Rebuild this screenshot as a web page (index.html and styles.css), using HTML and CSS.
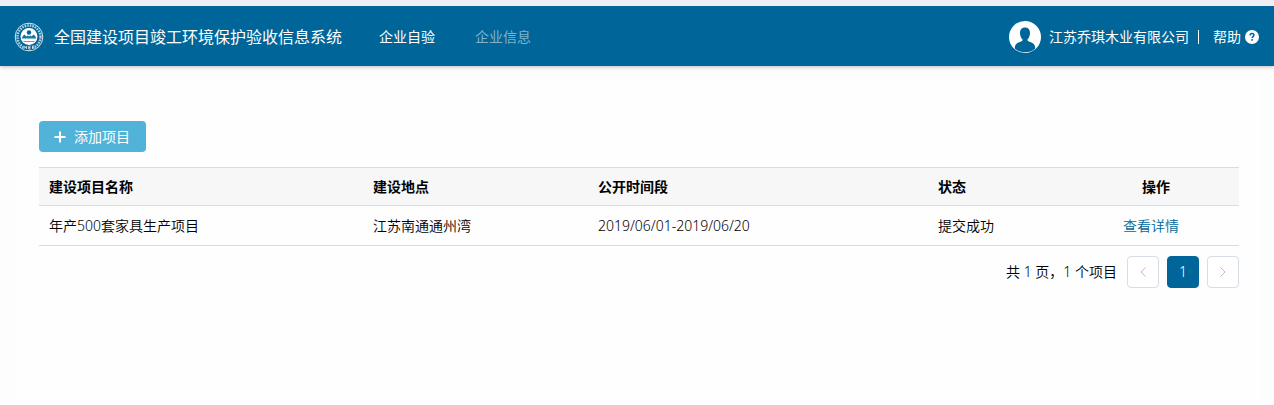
FILE: index.html
```html
<!DOCTYPE html>
<html lang="zh-CN">
<head>
<meta charset="utf-8">
<meta name="viewport" content="width=device-width, initial-scale=1">
<title>全国建设项目竣工环境保护验收信息系统</title>
<link rel="stylesheet" href="styles.css">
</head>
<body>
<header class="topbar">
  <svg class="emblem" viewBox="0 0 30 30" aria-hidden="true">
    <circle class="emblem-line" cx="15" cy="15" r="13.800"/>
    <circle class="emblem-wreath" cx="15" cy="15" r="11.500"/>
    <path class="emblem-gap" d="M9 24.500h12l-1.500 3.500h-9z"/>
    <path class="emblem-marks" d="M10 27v-2.800l1.300 1.600 1.300-1.600V27M16.700 24.200h-2V27h2M14.700 25.600h1.800M20.500 24h-2v2.700h2M18.500 25.400h1.800"/>
    <circle class="emblem-disc" cx="15" cy="14.500" r="8.500"/>
    <circle class="emblem-sun" cx="15" cy="10.500" r="2.200"/>
    <path class="emblem-hills" d="M7.800 16.600h14.400l-1-2.600-1.700-1.400-1.800 2-1.300-1.200-1.400 1.200-1.400-1.200-1.300 1.200-1.800-2-1.700 1.400z"/>
    <path class="emblem-waves" d="M9.500 19.500h11"/>
  </svg>
  <h1 class="brand">全国建设项目竣工环境保护验收信息系统</h1>
  <nav class="nav">
    <a class="nav-link nav-link-active" href="#" aria-current="page">企业自验</a>
    <a class="nav-link" href="#">企业信息</a>
  </nav>
  <div class="account">
    <svg class="avatar" viewBox="0 0 32 32" aria-hidden="true">
      <circle cx="16" cy="16" r="16" fill="#fff"/>
      <path fill="#006699" d="M16 6.500c3.200 0 5 2.200 5 5.500 0 2.800-1.300 5.400-2.600 6.600 .1 1.300.6 1.700 2 2.200 3.300 1 5.100 2 5.600 4.700l.3 2C23.500 30.200 20 31.300 16 31.300S8.500 30.200 5.700 27.500l.3-2c.5-2.700 2.300-3.700 5.600-4.700 1.400-.5 1.900-.9 2-2.200C12.300 17.400 11 14.800 11 12c0-3.300 1.800-5.500 5-5.500z"/>
    </svg>
    <span class="company">江苏乔琪木业有限公司</span>
    <a class="help" href="#">帮助
      <svg class="help-icon" viewBox="0 0 14 14" aria-hidden="true">
        <circle cx="7" cy="7" r="7" fill="#fff"/>
        <path d="M5.100 5.500c0-1.200.8-1.900 1.900-1.900s1.900.7 1.900 1.700c0 1.200-1.800 1.300-1.800 2.700" fill="none" stroke="#006699" stroke-width="1.500"/>
        <rect x="6.300" y="9.100" width="1.600" height="1.600" fill="#006699"/>
      </svg>
    </a>
  </div>
</header>
<main class="panel">
  <button class="add" type="button">
    <svg class="add-icon" viewBox="0 0 12 12" aria-hidden="true"><path d="M6 .500v11M.500 6h11" stroke="#fff" stroke-width="2"/></svg>
    添加项目
  </button>
  <table class="projects">
    <thead>
      <tr>
        <th class="col-name" scope="col">建设项目名称</th>
        <th class="col-place" scope="col">建设地点</th>
        <th class="col-period" scope="col">公开时间段</th>
        <th class="col-status" scope="col">状态</th>
        <th class="col-action" scope="col">操作</th>
      </tr>
    </thead>
    <tbody>
      <tr>
        <td>年产500套家具生产项目</td>
        <td>江苏南通通州湾</td>
        <td>2019/06/01-2019/06/20</td>
        <td>提交成功</td>
        <td class="action-cell"><a class="detail" href="#">查看详情</a></td>
      </tr>
    </tbody>
  </table>
  <nav class="pager" aria-label="分页">
    <span class="pager-total">共 1 页，1 个项目</span>
    <button class="page" type="button" disabled aria-label="上一页"><svg class="chevron" viewBox="0 0 10 10" aria-hidden="true"><path d="M7.500.500 3 5l4.500 4.500"/></svg></button>
    <button class="page page-current" type="button" aria-current="page">1</button>
    <button class="page" type="button" disabled aria-label="下一页"><svg class="chevron" viewBox="0 0 10 10" aria-hidden="true"><path d="M2.500.500 7 5 2.500 9.500"/></svg></button>
  </nav>
</main>
</body>
</html>
```
FILE: styles.css
```css
* { box-sizing: border-box; }

body {
  display: flex;
  flex-direction: column;
  min-height: 100vh;
  margin: 0;
  border-top: 6px solid #efeef3;
  background: #fdfdfd;
  color: #000;
  font: 350 14px/20px "Noto Sans", "Noto Sans CJK SC", sans-serif;
}

a { text-decoration: none; }

button { font: inherit; cursor: pointer; }

.topbar {
  display: flex;
  align-items: center;
  height: 60px;
  padding: 2px 15px 0 14px;
  background: #006699;
  color: #fff;
  font-weight: 400;
  box-shadow: 0 1px 4px rgba(0, 0, 0, 0.25);
}

.emblem { width: 30px; height: 30px; margin-right: 10px; }
.emblem-line { fill: none; stroke: #d9e8f0; stroke-width: 1; }
.emblem-wreath { fill: none; stroke: #b3d1e0; stroke-width: 2.4; stroke-dasharray: 1.6 1; }
.emblem-gap { fill: #006699; }
.emblem-disc { fill: #fff; }
.emblem-marks { fill: none; stroke: #e6f0f5; stroke-width: 0.8; }
.emblem-hills { fill: #1a75a3; }
.emblem-waves { fill: none; stroke: #66a3c2; stroke-width: 1; }
.emblem-sun { fill: #006699; }

.brand { margin: 0; font-size: 16px; font-weight: 400; }

.nav { display: flex; gap: 40px; margin-left: 37px; }
.nav-link { color: #7fb2cc; }
.nav-link-active { color: #fff; }

.account { display: flex; align-items: center; margin-left: auto; }
.avatar { width: 32px; height: 32px; margin-right: 8px; }
.company { padding-right: 9px; }
.help {
  display: flex;
  align-items: center;
  gap: 4px;
  padding-left: 15px;
  background: linear-gradient(#fff, #fff) left center / 1px 14px no-repeat;
  color: #fff;
}
.help-icon { width: 14px; height: 14px; }

.panel {
  flex: 1;
  margin: 14px 14px 0 18px;
  padding: 41px 21px 20px;
  background: #fefefe;
}

.add {
  display: flex;
  align-items: center;
  gap: 8px;
  height: 31px;
  margin-bottom: 15px;
  padding: 0 16px 0 15px;
  border: 0;
  border-radius: 4px;
  background: #52b3d9;
  color: #fff;
  font-weight: 400;
}
.add-icon { width: 12px; height: 12px; }

.projects {
  width: 100%;
  border-collapse: collapse;
  table-layout: fixed;
}
.projects th,
.projects td {
  padding: 9px 10px;
  border-top: 1px solid #dcdcdc;
  border-bottom: 1px solid #dcdcdc;
  text-align: left;
}
.projects td { padding: 10px 10px 9px; }
.projects th { padding-bottom: 8px; background: #f7f7f7; font-weight: 700; }
.col-name { width: 27%; }
.col-place { width: 18.75%; }
.col-period { width: 28.33%; }
.col-status { width: 12.08%; }
.projects .col-action { text-align: center; }
.projects .action-cell { padding-right: 20px; text-align: center; }
.detail { color: #006699; }

.pager {
  display: flex;
  align-items: center;
  justify-content: flex-end;
  gap: 8px;
  margin-top: 10px;
}
.pager-total { margin-right: 2px; }
.page {
  display: flex;
  align-items: center;
  justify-content: center;
  width: 32px;
  height: 32px;
  padding: 0;
  border: 1px solid #d7dde4;
  border-radius: 4px;
  background: #fff;
}
.page:disabled { cursor: not-allowed; }
.page-current { border-color: #006699; background: #006699; color: #fff; }
.chevron { width: 10px; height: 10px; fill: none; stroke: #bbb; stroke-width: 1; }
```
